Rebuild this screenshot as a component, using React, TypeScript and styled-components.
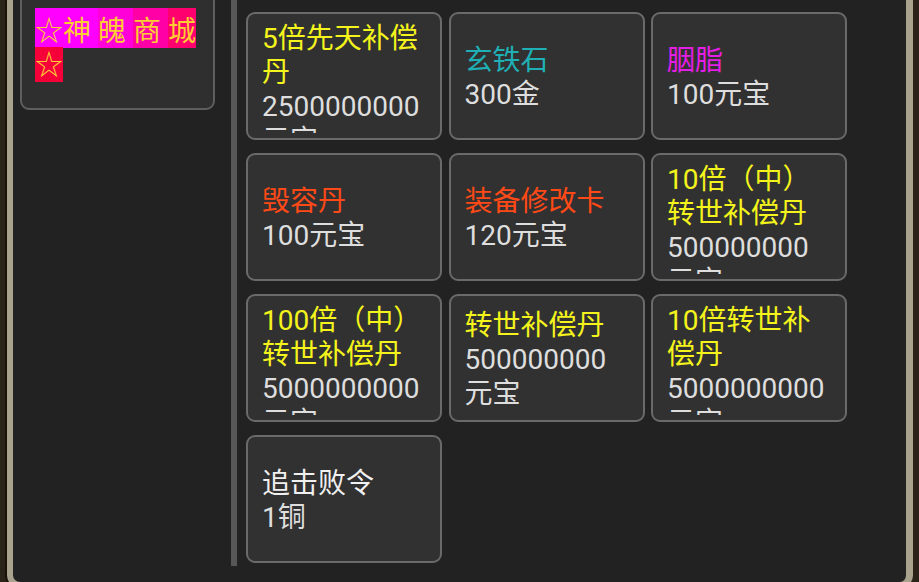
import React from "react";
import styled, { createGlobalStyle } from "styled-components";

const GlobalStyle = createGlobalStyle`
    html, body {
        margin: 0;
        padding: 0;
        background: #241c10;
    }
    * {
        box-sizing: border-box;
    }
`;

const Screen = styled.div`
    width: 919px;
    height: 582px;
    overflow: hidden;
    background: #2a2317;
    font-family: "Roboto", "Noto Sans CJK SC", sans-serif;
    text-spacing-trim: space-all;
`;

const Frame = styled.div`
    margin: 0 6px 0 7px;
    height: 588px;
    border: 6px solid #a9a38e;
    border-top: none;
    border-right-width: 7px;
    border-radius: 0 0 13px 13px;
    background: #222222;
    box-shadow: -2px 0 0 #1a1208;
`;

const Body = styled.div`
    display: flex;
    height: 566px;
`;

const SidePane = styled.div`
    width: 218px;
    padding-left: 7px;
`;

const MenuCard = styled.div`
    width: 195px;
    margin-top: -10px;
    padding: 23px 13px 25px;
    border: 2px solid #5e5e5e;
    border-radius: 9px;
    background: #2f2f2f;
`;

const MenuLabel = styled.div`
    font-size: 28px;
    line-height: 34px;
    color: #ffcc33;
`;

const LabelChar = styled.span<{ $bg: string; $lift: number }>`
    background: ${(p) => p.$bg};
    padding-top: ${(p) => p.$lift}px;
    white-space: pre;
`;

const Divider = styled.div`
    width: 6px;
    background: #575757;
`;

const Grid = styled.div`
    display: grid;
    grid-template-columns: repeat(3, 196px);
    grid-auto-rows: 128px;
    column-gap: 6.5px;
    row-gap: 13px;
    padding: 12px 0 0 9px;
    align-content: start;
`;

const ItemCard = styled.div`
    display: flex;
    padding: 8px 14px 5px;
    border: 2px solid #6a6a6a;
    border-radius: 9px;
    background: #313131;
`;

const ItemClip = styled.div`
    flex: 1;
    display: flex;
    flex-direction: column;
    overflow: hidden;
`;

const ItemText = styled.div`
    margin: auto 0;
    font-size: 28px;
    line-height: 34px;
`;

const ItemName = styled.div<{ $color: string }>`
    color: ${(p) => p.$color};
`;

const ItemPrice = styled.div`
    color: #dedede;
`;

const COLORS = {
    yellow: "#f4f41c",
    cyan: "#1fb0b6",
    magenta: "#e41ee4",
    orange: "#ff4916",
    white: "#f0f0f0",
};

interface ShopItem {
    name: string;
    price: string;
    color: string;
}

const items: ShopItem[] = [
    { name: "5倍先天补偿丹", price: "2500000000元宝", color: COLORS.yellow },
    { name: "玄铁石", price: "300金", color: COLORS.cyan },
    { name: "胭脂", price: "100元宝", color: COLORS.magenta },
    { name: "毁容丹", price: "100元宝", color: COLORS.orange },
    { name: "装备修改卡", price: "120元宝", color: COLORS.orange },
    { name: "10倍（中）转世补偿丹", price: "500000000元宝", color: COLORS.yellow },
    { name: "100倍（中）转世补偿丹", price: "5000000000元宝", color: COLORS.yellow },
    { name: "转世补偿丹", price: "500000000元宝", color: COLORS.yellow },
    { name: "10倍转世补偿丹", price: "5000000000元宝", color: COLORS.yellow },
    { name: "追击败令", price: "1铜", color: COLORS.white },
];

// each character of the menu title has its own backing colour
const labelChars = [
    { ch: "☆", bg: "#ff00ff", lift: 7 },
    { ch: "神 ", bg: "#ff00ff", lift: 7 },
    { ch: "魄 ", bg: "#ff00d8", lift: 7 },
    { ch: "商 ", bg: "#ff00a6", lift: 7 },
    { ch: "城", bg: "#ff006e", lift: 7 },
    { ch: "☆", bg: "#f6003a", lift: 2 },
];

const App: React.FC = () => {
    return (
        <>
            <GlobalStyle />
            <Screen>
                <Frame>
                    <Body>
                        <SidePane>
                            <MenuCard>
                                <MenuLabel>
                                    {labelChars.map((c, i) => (
                                        <LabelChar key={i} $bg={c.bg} $lift={c.lift}>
                                            {c.ch}
                                        </LabelChar>
                                    ))}
                                </MenuLabel>
                            </MenuCard>
                        </SidePane>
                        <Divider />
                        <Grid>
                            {items.map((item) => (
                                <ItemCard key={item.name}>
                                    <ItemClip>
                                        <ItemText>
                                            <ItemName $color={item.color}>{item.name}</ItemName>
                                            <ItemPrice>{item.price}</ItemPrice>
                                        </ItemText>
                                    </ItemClip>
                                </ItemCard>
                            ))}
                        </Grid>
                    </Body>
                </Frame>
            </Screen>
        </>
    );
};

export default App;
